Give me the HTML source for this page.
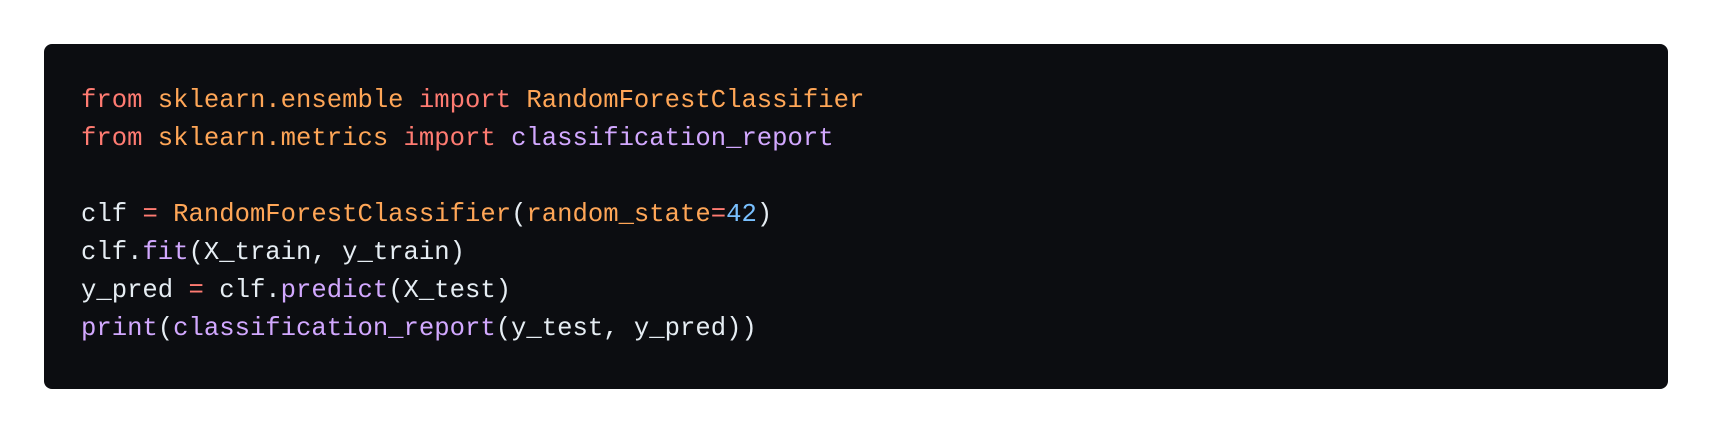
<!DOCTYPE html>
<html><head><meta charset="utf-8"><style>
html,body{margin:0;background:#fff;width:1712px;height:434px;overflow:hidden}
.box{position:absolute;left:44px;top:44px;width:1624px;height:345px;background:#0c0d11;border-radius:8px}
pre{margin:0;position:absolute;left:81px;top:82px;font-family:"Liberation Mono",monospace;font-size:25.6px;line-height:38px;color:#e6edf3}
.k{color:#ff7b72}.o{color:#ffa657}.p{color:#d2a8ff}.n{color:#79c0ff}
</style></head><body>
<div class="box"></div>
<pre><span class="k">from</span> <span class="o">sklearn.ensemble</span> <span class="k">import</span> <span class="o">RandomForestClassifier</span>
<span class="k">from</span> <span class="o">sklearn.metrics</span> <span class="k">import</span> <span class="p">classification_report</span>

clf <span class="k">=</span> <span class="o">RandomForestClassifier</span>(<span class="o">random_state</span><span class="k">=</span><span class="n">42</span>)
clf.<span class="p">fit</span>(X_train, y_train)
y_pred <span class="k">=</span> clf.<span class="p">predict</span>(X_test)
<span class="p">print</span>(<span class="p">classification_report</span>(y_test, y_pred))</pre>
</body></html>
